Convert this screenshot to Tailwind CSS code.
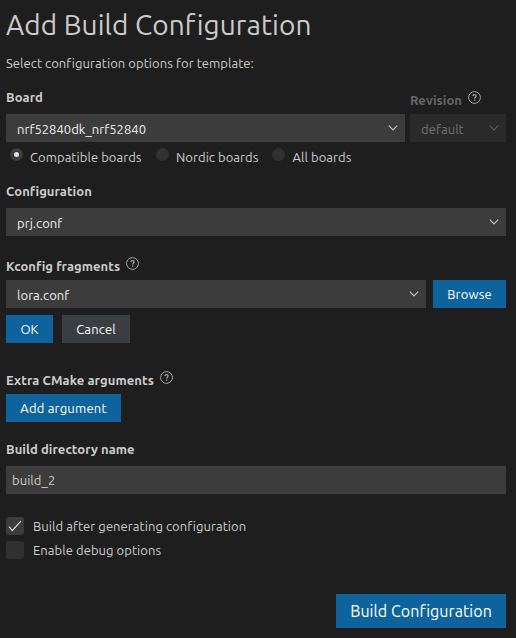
<!DOCTYPE html>
<html lang="en">
<head>
<meta charset="utf-8">
<title>Add Build Configuration</title>
<script src="https://cdn.jsdelivr.net/npm/@tailwindcss/browser@4"></script>
</head>
<body class="bg-[#1e1e1e]">
<svg class="hidden">
  <symbol id="chev" viewBox="0 0 16 16"><path d="M3.8 5.7 8 9.9l4.2-4.2" fill="none" stroke="currentColor" stroke-width="1.1"/></symbol>
  <symbol id="help" viewBox="0 0 13 13"><circle cx="6.5" cy="6.5" r="5.9" fill="none" stroke="currentColor" stroke-width="1"/><path d="M4.9 5.1c0-1 .7-1.5 1.6-1.5s1.6.6 1.6 1.4c0 1.1-1.5 1.2-1.5 2.5M6.6 8.5v1.3" fill="none" stroke="currentColor" stroke-width="1.3"/></symbol>
</svg>
<main class="flex h-[638px] w-[516px] flex-col overflow-hidden bg-[#1e1e1e] pl-1.5 pr-2.5 font-['Ubuntu','Noto_Sans',sans-serif] text-[13px] leading-[18px] tracking-[0.06px] whitespace-nowrap text-[#cccccc]">
  <h1 class="h-[48px] text-[28px] leading-[50px] tracking-[0.1px]">Add Build Configuration</h1>
  <p class="mt-1.5">Select configuration options for template:</p>

  <div class="mt-4 flex items-end gap-[5px]">
    <section class="w-[399px]">
      <h2 class="font-bold">Board</h2>
      <div class="mt-2 flex h-7 items-center justify-between bg-[#3c3c3c] pl-[11px] pr-1 pt-0.5 text-[#f0f0f0]"><span class="tracking-[0.03px]">nrf52840dk_nrf52840</span><svg class="size-4 -mt-0.5 text-[#c5c5c5]"><use href="#chev"/></svg></div>
    </section>
    <section class="w-24">
      <h2 class="flex font-bold text-[#656565]"><span class="w-[58px]">Revision</span><svg class="size-[13px] text-[#a5a5a5]"><use href="#help"/></svg></h2>
      <div class="mt-[5px] flex h-7 items-center justify-between bg-[#2a2a2a] pl-[11px] pr-1 pt-0.5 text-[#737373]"><span>default</span><svg class="size-4 -mt-0.5 text-[#5f5f5f]"><use href="#chev"/></svg></div>
    </section>
  </div>

  <div class="mt-1.5 flex">
    <label class="flex w-[146px] pl-1"><i class="mr-[7px] flex size-[13px] items-center justify-center rounded-full bg-[#3c3c3c]"><b class="size-[5px] rounded-full bg-[#e0e0e0]"></b></i><span>Compatible boards</span></label>
    <label class="flex w-[117px] pl-1"><i class="mr-[7px] size-[13px] rounded-full bg-[#313131]"></i><span>Nordic boards</span></label>
    <label class="flex pl-[3px]"><i class="mr-[7.5px] size-[13px] rounded-full bg-[#313131]"></i><span>All boards</span></label>
  </div>

  <section class="mt-4">
    <h2 class="font-bold">Configuration</h2>
    <div class="mt-2 flex h-7 items-center justify-between bg-[#3c3c3c] pl-[11px] pr-1 pt-0.5 text-[#f0f0f0]"><span>prj.conf</span><svg class="size-4 -mt-0.5 text-[#c5c5c5]"><use href="#chev"/></svg></div>
  </section>

  <section class="mt-[21px]">
    <h2 class="flex font-bold"><span class="w-[120px]">Kconfig fragments</span><svg class="size-[13px] text-[#a5a5a5]"><use href="#help"/></svg></h2>
    <div class="mt-[5px] flex gap-[7px]">
      <div class="flex h-7 w-[420px] items-center justify-between bg-[#3c3c3c] pl-[11px] pr-1 pt-0.5 text-[#f0f0f0]"><span>lora.conf</span><svg class="size-4 -mt-0.5 text-[#c5c5c5]"><use href="#chev"/></svg></div>
      <button class="h-7 w-[73px] bg-[#0e639c] tracking-[0.15px] text-white">Browse</button>
    </div>
    <div class="mt-[7px] flex gap-[9px]">
      <button class="h-7 w-[47px] bg-[#0e639c] text-white">OK</button>
      <button class="h-7 w-[68px] bg-[#3a3d41] tracking-[0.15px] text-white">Cancel</button>
    </div>
  </section>

  <section class="mt-7">
    <h2 class="flex font-bold"><span class="w-[154px] tracking-[0.09px]">Extra CMake arguments</span><svg class="size-[13px] text-[#a5a5a5]"><use href="#help"/></svg></h2>
    <button class="mt-[5px] block h-7 w-[115px] bg-[#0e639c] tracking-[0.2px] text-white">Add argument</button>
  </section>

  <section class="mt-[18px]">
    <h2 class="font-bold">Build directory name</h2>
    <div class="mt-2 flex h-7 items-center bg-[#3c3c3c] pl-1.5">build_2</div>
  </section>

  <div class="mt-[23px] flex flex-col gap-1.5">
    <label class="flex gap-[9px]"><i class="size-[18px] rounded-[3px] bg-[#3c3c3c]"><svg class="size-[18px]" viewBox="0 0 18 18"><path d="m3 9.7 3.3 4L15 4" fill="none" stroke="#f0f0f0" stroke-width="1.1"/></svg></i><span>Build after generating configuration</span></label>
    <label class="flex gap-[9px]"><i class="size-[18px] rounded-[3px] bg-[#313131]"></i><span>Enable debug options</span></label>
  </div>

  <button class="mt-[35px] h-[34px] w-[170px] self-end bg-[#0e639c] text-[16px] text-white">Build Configuration</button>
</main>
</body>
</html>
